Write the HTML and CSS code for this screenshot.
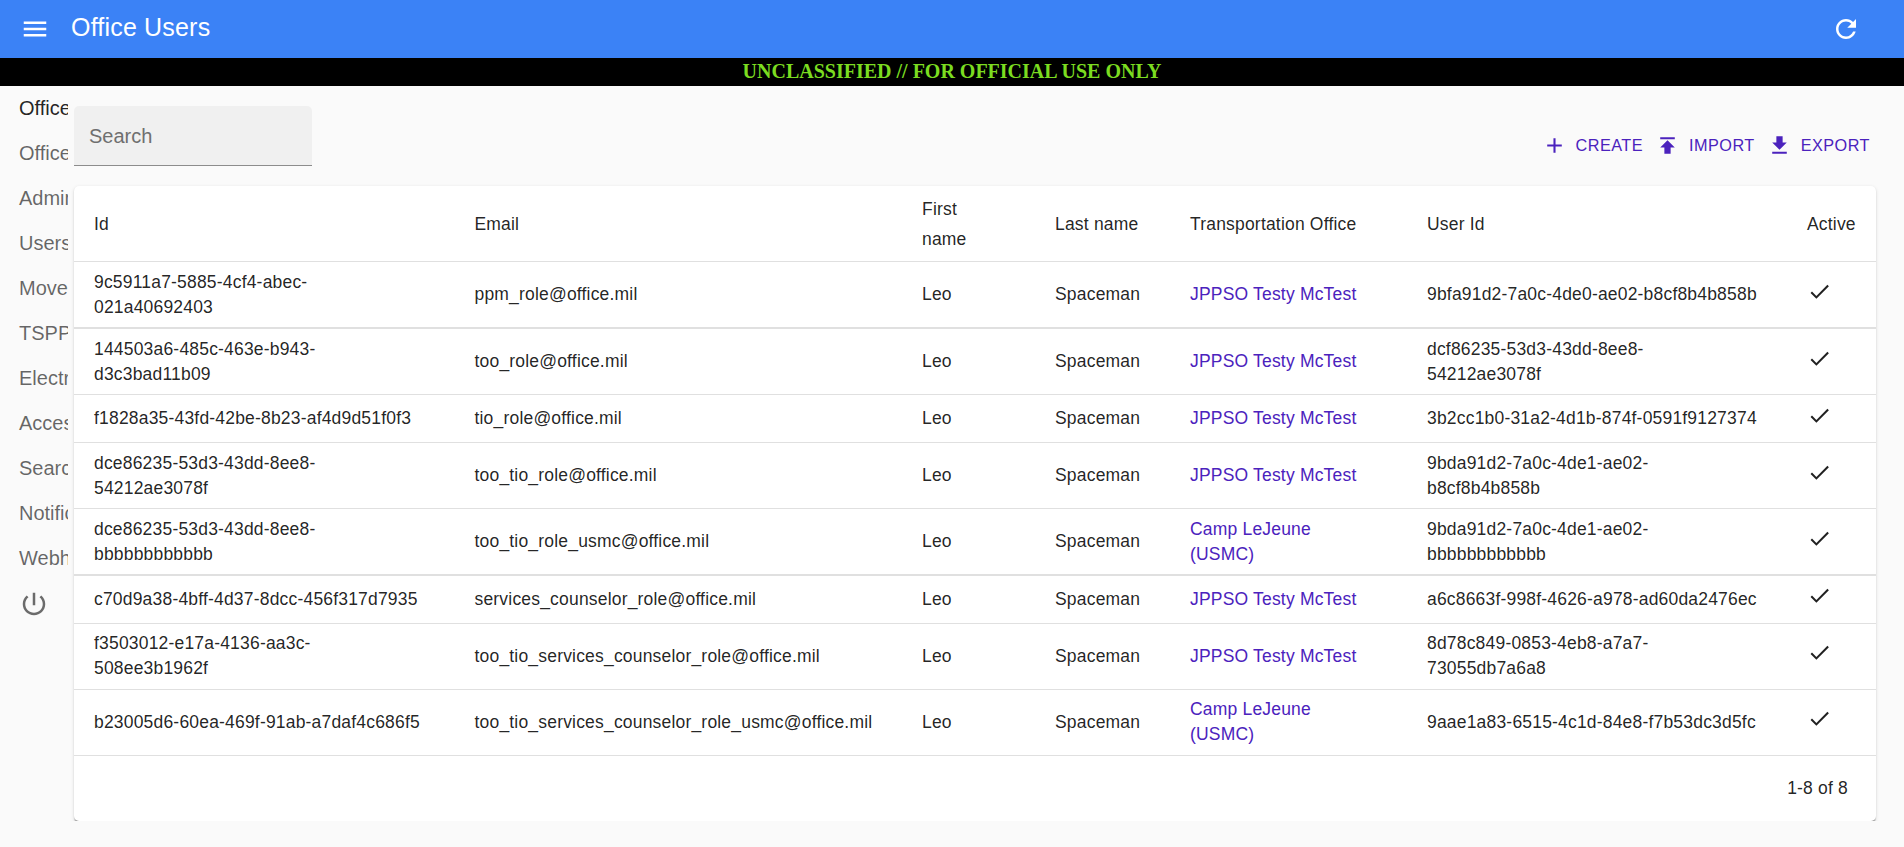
FILE: index.html
```html
<!DOCTYPE html>
<html lang="en">
<head>
    <meta charset="UTF-8">
    <meta name="viewport" content="width=device-width, initial-scale=1.0">
    <title>Office Users</title>
    <link rel="stylesheet" href="styles.css">
</head>
<body>

<header class="appbar">
    <svg class="icon-lg" viewBox="0 0 24 24"><path d="M3 18h18v-2H3v2zm0-5h18v-2H3v2zm0-7v2h18V6H3z"/></svg>
    <h1 class="appbar-title">Office Users</h1>
    <svg class="icon-lg" viewBox="0 0 24 24"><path d="M17.65 6.35C16.2 4.9 14.21 4 12 4c-4.42 0-7.99 3.58-7.99 8s3.57 8 7.99 8c3.73 0 6.84-2.55 7.73-6h-2.08c-.82 2.33-3.04 4-5.65 4-3.31 0-6-2.69-6-6s2.69-6 6-6c1.66 0 3.14.69 4.22 1.78L13 11h7V4l-2.35 2.35z"/></svg>
</header>

<div class="banner">UNCLASSIFIED // FOR OFFICIAL USE ONLY</div>

<div class="main">
    <nav class="sidebar">
        <a class="nav-item active">Office Users</a>
        <a class="nav-item">Offices</a>
        <a class="nav-item">Admin Users</a>
        <a class="nav-item">Users</a>
        <a class="nav-item">Moves</a>
        <a class="nav-item">TSPPs</a>
        <a class="nav-item">Electronic Orders</a>
        <a class="nav-item">Access Codes</a>
        <a class="nav-item">Search Moves</a>
        <a class="nav-item">Notifications</a>
        <a class="nav-item">Webhook Subscriptions</a>
        <a class="nav-item"><svg class="icon-power" viewBox="0 0 24 24"><path d="M13 3h-2v10h2V3zm4.83 2.17l-1.42 1.42C17.99 7.86 19 9.81 19 12c0 3.87-3.13 7-7 7s-7-3.13-7-7c0-2.19 1.01-4.14 2.58-5.42L6.17 5.17C4.23 6.82 3 9.26 3 12c0 4.97 4.03 9 9 9s9-4.03 9-9c0-2.74-1.23-5.18-3.17-6.83z"/></svg></a>
    </nav>

    <div class="content">
        <div class="toolbar">
            <input class="search" type="text" placeholder="Search">
            <div class="actions">
                <a class="action"><svg class="icon-sm" viewBox="0 0 24 24"><path d="M19 13h-6v6h-2v-6H5v-2h6V5h2v6h6v2z"/></svg>Create</a>
                <a class="action"><svg class="icon-sm" viewBox="0 0 24 24"><path d="M5 4v2h14V4H5zm0 10h4v6h6v-6h4l-7-7-7 7z"/></svg>Import</a>
                <a class="action"><svg class="icon-sm" viewBox="0 0 24 24"><path d="M19 9h-4V3H9v6H5l7 7 7-7zM5 18v2h14v-2H5z"/></svg>Export</a>
            </div>
        </div>

        <div class="card">
            <table class="users">
                <colgroup>
                    <col class="col-id">
                    <col class="col-email">
                    <col class="col-first">
                    <col class="col-last">
                    <col class="col-office">
                    <col class="col-user">
                    <col class="col-active">
                </colgroup>
                <thead>
                    <tr>
                        <th>Id</th>
                        <th>Email</th>
                        <th>First<br>name</th>
                        <th>Last name</th>
                        <th>Transportation Office</th>
                        <th>User Id</th>
                        <th>Active</th>
                    </tr>
                </thead>
                <tbody id="rows"></tbody>
            </table>
            <div class="pager">1-8 of 8</div>
        </div>
    </div>
</div>

<script>
const rows = [
    ['9c5911a7-5885-4cf4-abec-<br>021a40692403', 'ppm_role@office.mil', 'JPPSO Testy McTest', '9bfa91d2-7a0c-4de0-ae02-b8cf8b4b858b', true],
    ['144503a6-485c-463e-b943-<br>d3c3bad11b09', 'too_role@office.mil', 'JPPSO Testy McTest', 'dcf86235-53d3-43dd-8ee8-<br>54212ae3078f', false],
    ['f1828a35-43fd-42be-8b23-af4d9d51f0f3', 'tio_role@office.mil', 'JPPSO Testy McTest', '3b2cc1b0-31a2-4d1b-874f-0591f9127374', false],
    ['dce86235-53d3-43dd-8ee8-<br>54212ae3078f', 'too_tio_role@office.mil', 'JPPSO Testy McTest', '9bda91d2-7a0c-4de1-ae02-<br>b8cf8b4b858b', false],
    ['dce86235-53d3-43dd-8ee8-<br>bbbbbbbbbbbb', 'too_tio_role_usmc@office.mil', 'Camp LeJeune<br>(USMC)', '9bda91d2-7a0c-4de1-ae02-<br>bbbbbbbbbbbb', true],
    ['c70d9a38-4bff-4d37-8dcc-456f317d7935', 'services_counselor_role@office.mil', 'JPPSO Testy McTest', 'a6c8663f-998f-4626-a978-ad60da2476ec', false],
    ['f3503012-e17a-4136-aa3c-<br>508ee3b1962f', 'too_tio_services_counselor_role@office.mil', 'JPPSO Testy McTest', '8d78c849-0853-4eb8-a7a7-<br>73055db7a6a8', false],
    ['b23005d6-60ea-469f-91ab-a7daf4c686f5', 'too_tio_services_counselor_role_usmc@office.mil', 'Camp LeJeune<br>(USMC)', '9aae1a83-6515-4c1d-84e8-f7b53dc3d5fc', false]
];

const check = '<svg class="icon-check" viewBox="0 0 24 24"><path d="M9 16.2L4.8 12l-1.4 1.4L9 19 21 7l-1.4-1.4L9 16.2z"/></svg>';

document.getElementById('rows').innerHTML = rows.map(r => `
    <tr class="${r[4] ? 'thick' : ''}">
        <td>${r[0]}</td>
        <td>${r[1]}</td>
        <td>Leo</td>
        <td>Spaceman</td>
        <td><a class="link">${r[2]}</a></td>
        <td>${r[3]}</td>
        <td>${check}</td>
    </tr>`).join('');
</script>

</body>
</html>
```

FILE: styles.css
```css
body {
    margin: 0;
    font-family: "Liberation Sans", Arial, sans-serif;
    background-color: #fafafa;
    color: rgba(0, 0, 0, 0.87);
}
.appbar {
    display: flex;
    align-items: center;
    height: 58px;
    padding: 0 43px 0 20px;
    background-color: #3b82f6;
    color: #fff;
}
.appbar-title {
    flex: 1;
    margin: 0 0 3px 21px;
    font-size: 25px;
    font-weight: normal;
    letter-spacing: 0.0075em;
}
.icon-lg {
    width: 30px;
    height: 30px;
    fill: currentColor;
}
.banner {
    height: 28px;
    background-color: #000;
    color: #7bdc20;
    font-family: "Liberation Serif", "Times New Roman", serif;
    font-size: 20px;
    font-weight: bold;
    line-height: 26px;
    text-align: center;
}
.main {
    display: flex;
}
.sidebar {
    flex: none;
    width: 68px;
    overflow: hidden;
}
.nav-item {
    display: flex;
    align-items: center;
    height: 45px;
    padding-left: 19px;
    font-size: 20px;
    white-space: nowrap;
    color: rgba(0, 0, 0, 0.6);
}
.nav-item.active {
    color: rgba(0, 0, 0, 0.87);
}
.icon-power {
    width: 30px;
    height: 30px;
    fill: #6b6b6b;
}
.content {
    flex: 1;
    min-width: 0;
    padding: 20px 28px 0 6px;
}
.toolbar {
    display: flex;
    justify-content: space-between;
    align-items: flex-end;
}
.search {
    box-sizing: border-box;
    width: 238px;
    height: 60px;
    padding: 2px 15px 0;
    border: none;
    border-bottom: 1px solid #8c8c8c;
    border-radius: 5px 5px 0 0;
    background-color: #f0f0f0;
    font-family: inherit;
    font-size: 20px;
}
.search::placeholder {
    color: #6f6f6f;
    opacity: 1;
}
.actions {
    display: flex;
    margin-bottom: 8px;
}
.action {
    display: flex;
    align-items: center;
    gap: 9px;
    padding: 0 6px 0 6px;
    color: #4b22bd;
    font-size: 16.25px;
    letter-spacing: 0.02857em;
    text-transform: uppercase;
}
.icon-sm {
    width: 25px;
    height: 25px;
    fill: currentColor;
}
.card {
    margin-top: 20px;
    border-radius: 5px;
    background-color: #fff;
    box-shadow: 0 2.5px 1.25px -1.25px rgba(0, 0, 0, 0.2), 0 1.25px 1.25px 0 rgba(0, 0, 0, 0.14), 0 1.25px 3.75px 0 rgba(0, 0, 0, 0.12);
}
.users {
    width: 100%;
    table-layout: fixed;
    border-collapse: collapse;
    font-size: 17.5px;
    letter-spacing: 0.01071em;
}
.col-id { width: 380.5px; }
.col-email { width: 447.5px; }
.col-first { width: 133px; }
.col-last { width: 135px; }
.col-office { width: 237px; }
.col-user { width: 380px; }
.col-active { width: 89px; }
.users th {
    padding: 7.5px 20px;
    border-bottom: 1px solid #e0e0e0;
    font-weight: normal;
    line-height: 30px;
    text-align: left;
}
.users td {
    box-sizing: border-box;
    height: 48px;
    padding: 7.5px 20px;
    border-bottom: 1px solid #e0e0e0;
    line-height: 25px;
}
.users tr.thick td {
    border-bottom-width: 2px;
}
.link {
    color: #4b22bd;
}
.icon-check {
    display: block;
    width: 25px;
    height: 25px;
    margin-top: -7px;
    fill: rgba(0, 0, 0, 0.87);
}
.pager {
    height: 65px;
    padding-right: 28px;
    font-size: 17.5px;
    letter-spacing: 0.01071em;
    line-height: 65px;
    text-align: right;
}
```
